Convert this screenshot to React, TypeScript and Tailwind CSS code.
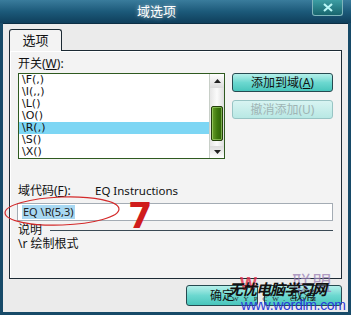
import React from "react";

const cjk = { fontFamily: '"Noto Sans", "Noto Sans CJK SC", sans-serif' };

function ScrollBar() {
  return (
    <div className="flex w-[15px] flex-col border-l border-[#c8cfc8] bg-gradient-to-r from-[#e6e6e6] via-[#fbfbfb] to-[#dedede]">
      <div className="flex h-[14px] items-center justify-center bg-gradient-to-b from-[#ffffff] to-[#dcdcdc]">
        <svg width="7" height="4" viewBox="0 0 7 4"><path d="M0 4 L3.5 0 L7 4 Z" fill="#222" /></svg>
      </div>
      <div className="h-[18px]" />
      <div className="mx-[1px] h-[35px] rounded-[2px] border border-[#24400c] bg-gradient-to-r from-[#6a9f2a] via-[#3f7a0e] to-[#2f6208] shadow-[inset_0_0_0_1px_rgba(170,220,120,0.6)]" />
      <div className="flex-1" />
      <div className="flex h-[12px] items-center justify-center bg-gradient-to-b from-[#dcdcdc] to-[#ffffff]">
        <svg width="7" height="4" viewBox="0 0 7 4"><path d="M0 0 L3.5 4 L7 0 Z" fill="#222" /></svg>
      </div>
    </div>
  );
}

function TealButton({ children, disabled, className = "" }: { children: React.ReactNode; disabled?: boolean; className?: string }) {
  return (
    <div
      className={
        "flex items-center justify-center rounded-[3px] border text-[12px] leading-none " +
        (disabled
          ? "border-[#98c4c4] bg-gradient-to-b from-[#d8f4f2] to-[#b8e8e4] text-[#9fb4b4] "
          : "border-[#274a50] bg-gradient-to-b from-[#b4f0ea] via-[#6cd8d0] to-[#48c6bc] text-[#111] ") +
        className
      }
      style={cjk}
    >
      {children}
    </div>
  );
}

export default function App() {
  const items = ["\\F(,)", "\\I(,,)", "\\L()", "\\O()", "\\R(,)", "\\S()", "\\X()"];
  return (
    <div className="relative flex h-[315px] w-[351px] flex-col overflow-hidden bg-[#174a68]" style={cjk}>
      {/* title bar */}
      <div className="relative flex h-[23px] shrink-0 items-center bg-gradient-to-b from-[#3a7c9c] via-[#1c5a7a] to-[#0f3f5c]">
        <div className="flex w-[313px] justify-center pt-[1px] text-[13px] text-white [text-shadow:0_0_4px_rgba(255,255,255,0.6)]">域选项</div>
        <div className="absolute right-[8px] top-0 flex h-[16px] w-[31px] items-center justify-center rounded-b-[3px] border border-t-0 border-[#7fb6bc] bg-gradient-to-b from-[#3d9ea4] to-[#17656e]">
          <svg width="10" height="9" viewBox="0 0 10 9"><path d="M1 1 L9 8 M9 1 L1 8" stroke="#b8f6f6" strokeWidth="2.2" /></svg>
        </div>
      </div>

      {/* client area */}
      <div className="mx-[3px] mb-[3px] flex flex-1 flex-col border-t border-[#0b2e44] bg-[#ebebeb] px-[6px] pt-[5px]">
        {/* tab */}
        <div className="flex">
          <div className="relative z-10 -mb-[1px] flex h-[22px] w-[53px] items-center justify-center rounded-t-[3px] border border-b-0 border-[#1c2a34] bg-[#f3f3f3] text-[13px] text-[#111]">
            选项
          </div>
        </div>
        {/* panel */}
        <div className="flex h-[229px] flex-col border border-[#1c2a34] bg-[#f3f3f3] px-[8px] pt-[4px] shadow-[inset_1px_1px_0_#ffffff]">
          <div className="h-[18px] text-[12px] leading-[18px] text-[#111]">
            开关(<span className="underline">W</span>):
          </div>
          <div className="flex items-start">
            <div className="flex h-[86px] w-[207px] border border-[#2f5a20] bg-white">
              <div className="flex flex-1 flex-col">
                {items.map((it, i) => (
                  <div
                    key={i}
                    className={"h-[12px] pl-[3px] leading-[12px] text-[#111] " + (i === 4 ? "bg-[#7dd6f4]" : "")}
                    style={{ fontFamily: '"DejaVu Sans", sans-serif', fontSize: "11px" }}
                  >
                    {it}
                  </div>
                ))}
              </div>
              <ScrollBar />
            </div>
            <div className="ml-[7px] flex flex-col gap-[8px]">
              <TealButton className="h-[19px] w-[101px]">
                添加到域(<span className="underline">A</span>)
              </TealButton>
              <TealButton disabled className="h-[19px] w-[101px]">
                撤消添加(U)
              </TealButton>
            </div>
          </div>

          <div className="mt-[25px] flex h-[13px] items-center text-[12px] leading-none text-[#111]">
            <span className="w-[77px]">
              域代码(<span className="underline">F</span>):
            </span>
            <span className="text-[11.5px]">EQ Instructions</span>
          </div>
          <div className="mt-[6px] flex h-[18px] w-[316px] -ml-[1px] items-center border border-[#a4acb4] bg-white pl-[4px]">
            <span className="bg-[#a8d8f2] px-[1px] text-[11px] leading-[14px] text-[#222]">EQ \R(5,3)</span>
          </div>
          <div className="mt-[3px] flex h-[12px] items-center text-[12px] leading-none text-[#111]">
            <span>说明</span>
            <div className="ml-[8px] h-0 flex-1 border-t border-[#3a4a55]" />
          </div>
          <div className="mt-[1px] text-[12px] leading-[14px] text-[#111]">\r 绘制根式</div>
        </div>

        {/* bottom buttons */}
        <div className="mt-[6px] flex justify-end gap-[6px]">
          <TealButton className="h-[21px] w-[72px]">确定</TealButton>
          <TealButton className="h-[21px] w-[78px]">取消</TealButton>
        </div>
      </div>

      {/* annotation overlays */}
      <svg className="absolute left-0 top-0" width="351" height="315" viewBox="0 0 351 315">
        <ellipse cx="62" cy="211" rx="57" ry="14" fill="none" stroke="#d42a2a" strokeWidth="1.2" transform="rotate(-2 62 211)" />
      </svg>
      <div className="absolute left-[128px] top-[197px] text-[35px] font-bold leading-[38px] text-[#d01c1c]" style={{ fontFamily: '"DejaVu Sans", sans-serif' }}>
        7
      </div>

      {/* watermark */}
      <div className="absolute left-[240px] top-[275px] text-[18px] font-bold leading-none text-[#e0304a] opacity-80" style={{ fontFamily: '"Liberation Sans", sans-serif' }}>
        W
      </div>
      <div className="absolute left-[292px] top-[274px] text-[20px] leading-none text-[#9a80b4] opacity-75" style={cjk}>
        联盟
      </div>
      <div className="absolute left-[228px] top-[281px] text-[15px] font-bold italic leading-none tracking-[-1px] text-[#111]" style={{ fontFamily: '"Noto Sans CJK SC", serif' }}>
        无忧电脑学习网
      </div>
      <div className="absolute left-[232px] top-[296px] text-[7px] leading-none tracking-[5px] text-[#222]" style={{ fontFamily: '"Liberation Serif", serif' }}>
        WYPCW.COM
      </div>
      <div className="absolute left-[241px] top-[298px] text-[14px] leading-none tracking-[-0.3px] text-[#2a3ad8]" style={{ fontFamily: '"Liberation Sans", sans-serif' }}>
        www.wordlm.com
      </div>
    </div>
  );
}
